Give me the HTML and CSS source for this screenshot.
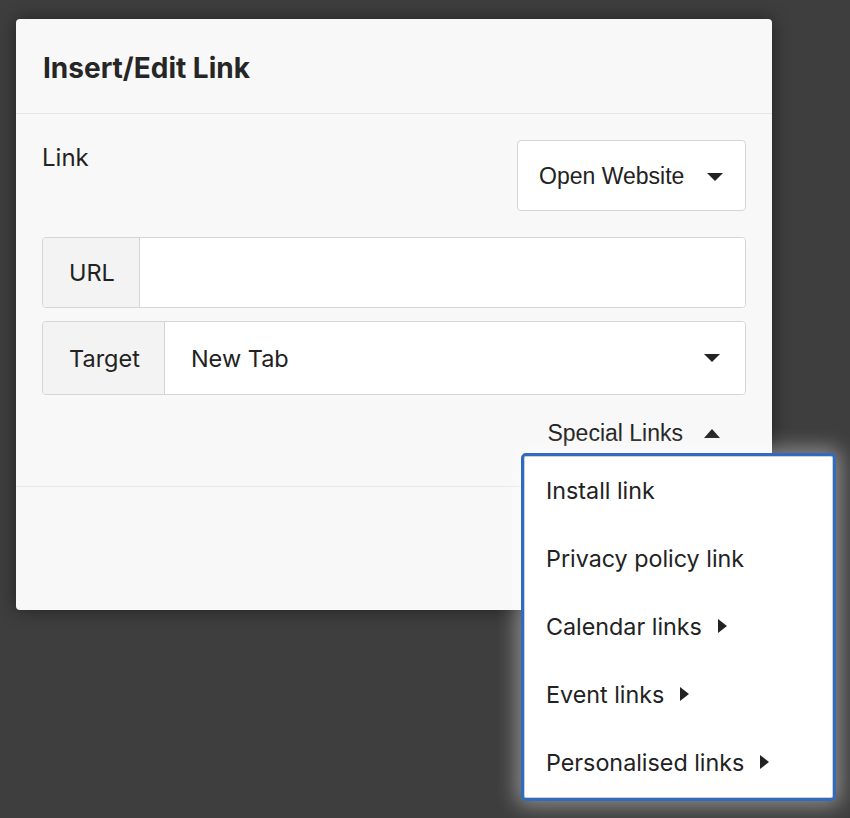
FILE: index.html
```html
<!DOCTYPE html>
<html lang="en">
<head>
<meta charset="utf-8">
<title>Insert/Edit Link</title>
<link rel="stylesheet" href="styles.css">
</head>
<body>
  <div class="dialog">
    <div class="dialog-header">
      <h1 class="dialog-title">Insert/Edit Link</h1>
    </div>
    <div class="dialog-body">
      <div class="link-row">
        <span class="field-label">Link</span>
        <button class="select-btn" type="button">
          <span>Open Website</span>
          <span class="caret caret-down"></span>
        </button>
      </div>
      <div class="input-group">
        <span class="addon">URL</span>
        <input class="control" type="text" value="">
      </div>
      <div class="input-group tall">
        <span class="addon">Target</span>
        <div class="control select">
          <span>New Tab</span>
          <span class="caret caret-down"></span>
        </div>
      </div>
      <div class="special-row">
        <button class="special-toggle" type="button">
          <span>Special Links</span>
          <span class="caret caret-up"></span>
        </button>
      </div>
    </div>
    <div class="dialog-footer"></div>
  </div>

  <ul class="menu">
    <li class="menu-item">Install link</li>
    <li class="menu-item">Privacy policy link</li>
    <li class="menu-item">Calendar links <span class="caret caret-right"></span></li>
    <li class="menu-item">Event links <span class="caret caret-right"></span></li>
    <li class="menu-item">Personalised links <span class="caret caret-right"></span></li>
  </ul>
</body>
</html>
```
FILE: styles.css
```css
html, body {
  margin: 0;
  padding: 0;
}

body {
  background: #3e3e3e;
  width: 850px;
  height: 818px;
  overflow: hidden;
  font-family: Inter, "Noto Sans", sans-serif;
  color: #222;
  padding: 19px 0 0 16px;
  box-sizing: border-box;
}

.dialog {
  width: 756px;
  height: 591px;
  background: #f8f8f8;
  border-radius: 4px;
  box-shadow: 0 0 18px rgba(0, 0, 0, 0.45);
  display: flex;
  flex-direction: column;
}

.dialog-header {
  height: 95px;
  border-bottom: 1px solid #e6e6e6;
  display: flex;
  align-items: center;
  padding: 0 27px;
  box-sizing: border-box;
}

.dialog-title {
  margin: 0;
  font-size: 28px;
  font-weight: 700;
  color: #262626;
  padding-top: 3px;
}

.dialog-body {
  padding: 26px 26px 0 26px;
  height: 373px;
  box-sizing: border-box;
  border-bottom: 1px solid #e8e8e8;
}

.link-row {
  display: flex;
  justify-content: space-between;
  align-items: flex-start;
  margin-bottom: 26px;
}

.field-label {
  font-size: 24px;
  line-height: 36px;
}

.select-btn {
  width: 229px;
  height: 71px;
  background: #fff;
  border: 1px solid #d5d5d5;
  border-radius: 4px;
  font-family: "Liberation Sans", Arial, sans-serif;
  font-size: 23px;
  color: #222;
  display: flex;
  align-items: center;
  justify-content: space-between;
  padding: 2px 22px 0 21px;
  box-sizing: border-box;
}

.caret {
  display: inline-block;
  width: 0;
  height: 0;
  border-style: solid;
  border-color: transparent;
}

.caret-down {
  border-width: 8px 8px 0 8px;
  border-top-color: #222;
}

.caret-up {
  border-width: 0 8px 9px 8px;
  border-bottom-color: #222;
}

.caret-right {
  border-width: 7.5px 0 7.5px 9px;
  border-left-color: #222;
  margin-left: 16px;
}

.input-group {
  display: flex;
  height: 71px;
  border: 1px solid #d5d5d5;
  border-radius: 4px;
  overflow: hidden;
  box-sizing: border-box;
  margin-bottom: 13px;
}

.input-group.tall {
  height: 74px;
}

.addon {
  background: #f3f3f3;
  border-right: 1px solid #d5d5d5;
  display: flex;
  align-items: center;
  padding: 0 24px 0 26px;
  font-size: 23.5px;
  color: #222;
}

.control {
  flex: 1;
  border: 0;
  background: #fff;
  font-family: inherit;
  font-size: 23.5px;
  color: #222;
  outline: none;
  padding: 0 26px;
  margin: 0;
}

.control.select {
  display: flex;
  align-items: center;
  justify-content: space-between;
  padding: 0 25px 0 26px;
}

.special-row {
  display: flex;
  justify-content: flex-end;
}

.special-toggle {
  background: none;
  border: 0;
  padding: 0 26px 0 0;
  margin-top: 12px;
  font-family: "Liberation Sans", Arial, sans-serif;
  font-size: 23px;
  color: #222;
  display: flex;
  align-items: center;
  gap: 21px;
}

.dialog-footer {
  flex: 1;
}

/* Special links dropdown, floats over the dialog */
.menu {
  position: absolute;
  left: 521px;
  top: 453px;
  width: 315px;
  height: 348px;
  margin: 0;
  padding: 0;
  list-style: none;
  background: #fff;
  border: 3px solid #2f6cc1;
  border-radius: 5px;
  box-sizing: border-box;
  box-shadow: inset 0 0 0 1px #cfcfcf, 0 0 20px 5px rgba(255, 255, 255, 0.4);
}

.menu-item {
  height: 68px;
  display: flex;
  align-items: center;
  padding-left: 22px;
  font-size: 23.3px;
  color: #222;
}
```
